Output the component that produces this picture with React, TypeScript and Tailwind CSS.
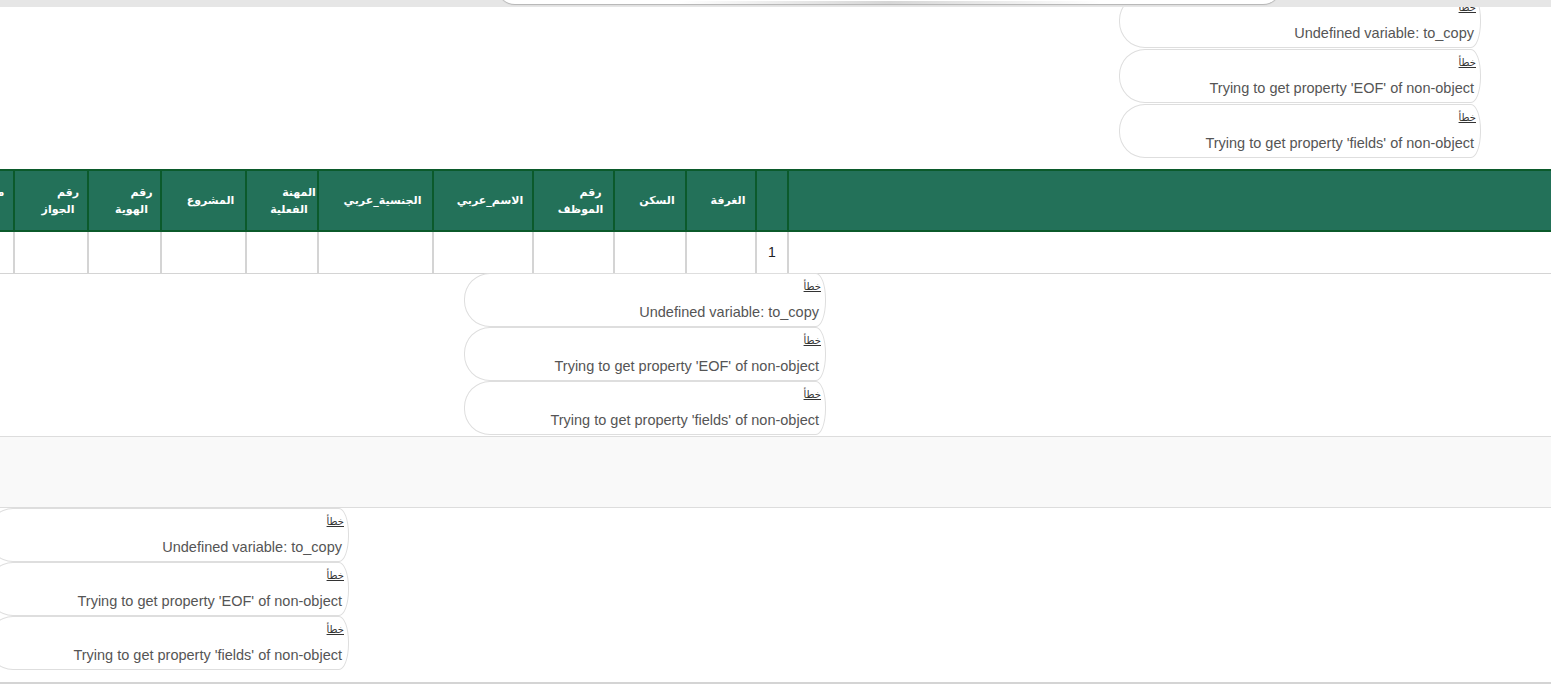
const ERRORS = [
  "Undefined variable: to_copy",
  "Trying to get property 'EOF' of non-object",
  "Trying to get property 'fields' of non-object",
];

type Col = { w: string; lines: string[]; body?: string };

const COLS: Col[] = [
  { w: "w-[764px]", lines: [] },
  { w: "w-[32px]", lines: [], body: "1" },
  { w: "w-[70px]", lines: ["الغرفة"] },
  { w: "w-[72px]", lines: ["السكن"] },
  { w: "w-[81px]", lines: ["رقم", "الموظف"] },
  { w: "w-[100px]", lines: ["الاسم_عربي"] },
  { w: "w-[115px]", lines: ["الجنسية_عربي"] },
  { w: "w-[72px]", lines: ["المهنة", "الفعلية"] },
  { w: "w-[85px]", lines: ["المشروع"] },
  { w: "w-[73px]", lines: ["رقم", "الهوية"] },
  { w: "w-[74px]", lines: ["رقم", "الجواز"] },
  { w: "w-[80px]", lines: ["مكان", "العمل"] },
];

const arabic = "font-['DejaVu_Sans',sans-serif]";
const latin = "font-['Liberation_Sans',Arial,sans-serif]";

function ErrorBox({ message }: { message: string }) {
  return (
    <div className="h-[54px] w-[362px] shrink-0 rounded-l-[26px] rounded-tr-[10px_26px] rounded-br-[10px_26px] border border-[#dedede] bg-white pr-[4px] pt-[5px] text-right">
      <div dir="rtl" className={`${arabic} text-[10px] leading-[16px] text-[#333] underline`}>
        خطأ
      </div>
      <div className={`${latin} mt-[7px] pr-[2px] text-[14.5px] leading-[20px] text-[#555]`}>{message}</div>
    </div>
  );
}

function ErrorGroup({ className, gap }: { className: string; gap: string }) {
  return (
    <div className={["flex flex-col items-end", gap, className].join(" ")}>
      {ERRORS.map((m) => (
        <ErrorBox key={m} message={m} />
      ))}
    </div>
  );
}

function HeaderCell({ col }: { col: Col }) {
  return (
    <div
      className={[
        "flex h-full shrink-0 flex-col items-center justify-center border-l-2 border-[#0b5a2b] bg-[#237159] pl-[16px] pr-[2px] text-center text-[11px] font-bold leading-[17px] text-white",
        arabic,
        col.w,
      ].join(" ")}
    >
      {col.lines.map((l, i) => (
        <span key={l} className={col.lines.length > 1 && i === 0 ? "pl-[20px]" : ""}>
          {l}
        </span>
      ))}
    </div>
  );
}

function DataTable() {
  return (
    <div className="mt-[11px] overflow-hidden">
      <div dir="rtl" className="flex h-[63px] border-y-2 border-[#0b5a2b] bg-[#237159]">
        {COLS.map((c, i) => (
          <HeaderCell key={i} col={c} />
        ))}
      </div>
      <div dir="rtl" className="flex h-[42px] border-b border-[#d4d4d4]">
        {COLS.map((c, i) => (
          <div
            key={i}
            className={[
              "flex h-full shrink-0 items-center justify-center border-l-2 border-[#d4d4d4] text-[14px] text-[#222]",
              latin,
              c.w,
            ].join(" ")}
          >
            {c.body}
          </div>
        ))}
      </div>
    </div>
  );
}

export default function App() {
  return (
    <div className="relative h-[699px] w-full overflow-hidden bg-white">
      {/* top toolbar strip, sits over the page */}
      <div className="absolute inset-x-0 top-0 z-10 h-[7px] bg-[#e6e6e6]">
        <div className="absolute left-[497px] top-[-20px] h-[24px] w-[784px] overflow-hidden rounded-b-[18px] bg-white shadow-[0_1px_1px_rgba(0,0,0,0.22)]">
          <div className="absolute bottom-0 left-[180px] right-[180px] h-[3px] bg-gradient-to-r from-transparent via-[#d6d6d6] to-transparent" />
        </div>
      </div>

      <ErrorGroup className="mt-[-6px] pr-[70px]" gap="gap-[1px]" />

      <DataTable />

      <ErrorGroup className="mt-[-1px] pr-[725px]" gap="gap-0" />

      <div className="mt-[1px] h-[72px] border-y border-[#dddddd] bg-[#f9f9f9]" />

      <ErrorGroup className="pr-[1202px]" gap="gap-0" />

      <div className="mt-[12px] border-t-2 border-[#d4d4d4]" />
    </div>
  );
}
